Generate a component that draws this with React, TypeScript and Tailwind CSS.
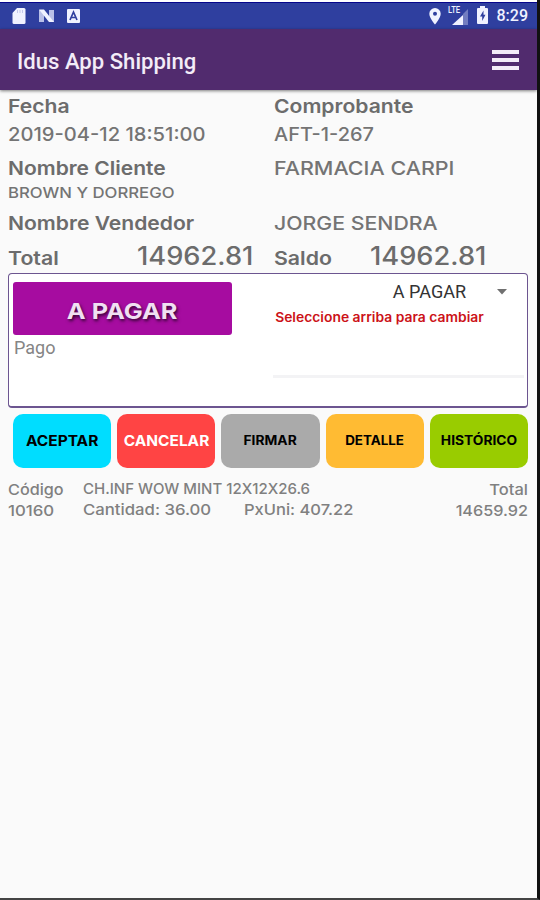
import React from 'react';

interface Action {
  label: string;
  box: string;
  text: string;
}

const actions: Action[] = [
  { label: 'ACEPTAR', box: 'bg-[#00ddff] text-black', text: 'text-[15px] scale-x-[1.03]' },
  { label: 'CANCELAR', box: 'bg-[#ff4444] text-white', text: 'text-[15px] scale-x-[1.03]' },
  { label: 'FIRMAR', box: 'bg-[#aaaaaa] text-black', text: 'text-[13px] scale-x-[1.06]' },
  { label: 'DETALLE', box: 'bg-[#ffbb33] text-black', text: 'text-[13px] scale-x-[1.03]' },
  { label: 'HISTÓRICO', box: 'bg-[#99cc00] text-black', text: 'text-[13px] scale-x-[1.06]' },
];

const StatusBar: React.FC = () => (
  <div className="flex h-[27px] items-center justify-between border-t border-[#06068c] bg-[#2f3f9f] pl-3 pr-[9px] text-[#f0f2ff]">
    <div className="flex items-center gap-[12px]">
      <svg width="14" height="16" viewBox="0 0 14 16" fill="currentColor">
        <path d="M5 0h7a1.500 1.500 0 0 1 1.500 1.500v13A1.500 1.500 0 0 1 12 16H2a1.500 1.500 0 0 1-1.500-1.500V5z" />
        <path d="M5.500 2v3M8 2v3M10.500 2v3" stroke="#c3c8ea" strokeWidth="1" />
      </svg>
      <svg width="17" height="14" viewBox="0 0 17 14">
        <path d="M1 1h5v12H1zM11 1h5v12h-5z" fill="#b9c0e8" />
        <path d="M1 .5h5L16 13h-5z" fill="currentColor" />
      </svg>
      <svg width="13" height="14" viewBox="0 0 13 14">
        <rect width="13" height="14" rx="1" fill="currentColor" />
        <path d="M3 11 6.500 3 10 11M4.500 8.500h4" fill="none" stroke="#2f3f9f" strokeWidth="1.700" />
      </svg>
    </div>
    <div className="flex items-center">
      <svg width="12" height="17" viewBox="0 0 12 17" fill="currentColor">
        <path fillRule="evenodd" d="M6 0a5.700 5.700 0 0 0-5.700 5.700C.3 10 6 16.500 6 16.500S11.700 10 11.700 5.700A5.700 5.700 0 0 0 6 0m0 3.700a2 2 0 1 1 0 4 2 2 0 0 1 0-4" />
      </svg>
      <div className="relative ml-[7px] h-[17px] w-[20px]">
        <svg className="absolute left-[4px] top-[1px]" width="16" height="16" viewBox="0 0 16 16" fill="currentColor">
          <path d="M16 0v16h-5V5z" opacity=".35" />
          <path d="M0 16 11 6v10z" />
        </svg>
        <span className="absolute -top-[2px] left-0 inline-block origin-left scale-x-[0.85] font-['Roboto',sans-serif] text-[9px] font-medium leading-[9px]">
          LTE
        </span>
      </div>
      <svg className="-mt-[3px] ml-[9px]" width="11" height="18" viewBox="0 0 11 18">
        <path d="M3 0h5v2h2a1 1 0 0 1 1 1v14a1 1 0 0 1-1 1H1a1 1 0 0 1-1-1V3a1 1 0 0 1 1-1h2z" fill="currentColor" />
        <path d="M6.500 4.500 3 10.500h2.200V15L8.500 8.800H6.500z" fill="#2f3f9f" />
      </svg>
      <span className="ml-[9px] font-['Roboto',sans-serif] text-[16px] font-medium leading-none">8:29</span>
    </div>
  </div>
);

const AppBar: React.FC = () => (
  <header className="relative flex h-[61px] items-center justify-between bg-[#512b6e] pl-[17px] pr-[18px] pt-[3px] shadow-[0_1px_3px_rgba(0,0,0,0.5)]">
    <h1 className="origin-left scale-x-[1.005] font-['Roboto',sans-serif] text-[22px] font-medium text-[#f3ecf7]">Idus App Shipping</h1>
    <div className="flex flex-col gap-[4px] pb-[2px]">
      <span className="h-[4px] w-[27px] bg-[#f3ecf7]" />
      <span className="h-[4px] w-[27px] bg-[#f3ecf7]" />
      <span className="h-[4px] w-[27px] bg-[#f3ecf7]" />
    </div>
  </header>
);

const Details: React.FC = () => (
  <section className="flex flex-col text-[19px] font-medium text-[#747474]">
    <div className="flex h-[30px] items-center pt-[2px] font-semibold text-[#6c6c6c]">
      <span className="w-[266px] origin-left scale-x-[1.11]">Fecha</span>
      <span className="origin-left scale-x-[1.11]">Comprobante</span>
    </div>
    <div className="flex h-[28px] items-center pt-px">
      <span className="w-[266px] origin-left scale-x-[1.06]">2019-04-12 18:51:00</span>
      <span className="origin-left scale-x-[1.05]">AFT-1-267</span>
    </div>
    <div className="flex h-[38px] items-center pt-[2px]">
      <span className="w-[266px] origin-left scale-x-[1.105] font-semibold text-[#6c6c6c]">Nombre Cliente</span>
      <span className="origin-left scale-x-[1.13]">FARMACIA CARPI</span>
    </div>
    <div className="flex h-[12px] items-center text-[15px]">
      <span className="origin-left scale-x-[1.115]">BROWN Y DORREGO</span>
    </div>
    <div className="flex h-[49px] items-center pt-[2px]">
      <span className="w-[266px] origin-left scale-x-[1.11] font-semibold text-[#6c6c6c]">Nombre Vendedor</span>
      <span className="origin-left scale-x-[1.12]">JORGE SENDRA</span>
    </div>
    <div className="flex h-[25px] items-baseline leading-[17px] text-[#6c6c6c]">
      <span className="w-[129px] origin-left scale-x-[1.12] font-semibold">Total</span>
      <span className="w-[137px] origin-left scale-x-[1.09] text-[25px]">14962.81</span>
      <span className="w-[96px] origin-left scale-x-[1.12] font-semibold">Saldo</span>
      <span className="origin-left scale-x-[1.09] text-[25px]">14962.81</span>
    </div>
  </section>
);

const PaymentCard: React.FC = () => (
  <section className="flex h-[135px] rounded-[4px] border border-b-2 border-[#6c5590] bg-white pl-[4px] pr-[3px] pt-[8px]">
    <div className="w-[260px]">
      <button className="flex h-[53px] w-[219px] items-center justify-center rounded-[3px] bg-[#a60ca0] pt-[5px] text-[22px] font-bold text-[#f0e0f2]">
        <span className="scale-x-[1.15] [text-shadow:1px_2px_3px_rgba(0,0,0,0.7)]">A PAGAR</span>
      </button>
      <p className="pl-px font-['Roboto',sans-serif] text-[18px] leading-[26px] text-[#858585]">Pago</p>
    </div>
    <div className="flex flex-1 flex-col">
      <div className="flex h-[20px] items-center justify-end pr-[17px]">
        <span className="origin-right scale-x-[0.95] font-['Roboto',sans-serif] text-[19px] text-[#333333]">A PAGAR</span>
        <svg className="ml-[31px]" width="10" height="6" viewBox="0 0 10 6">
          <path d="M0 0h10L5 5.500z" fill="#707070" />
        </svg>
      </div>
      <p className="origin-left scale-x-[1.067] pl-[2px] pt-[6px] text-[13px] font-semibold leading-[18px] text-[#cc1218]">
        Seleccione arriba para cambiar
      </p>
      <div className="mt-[49px] h-[3px] bg-[#f3f3f5]" />
    </div>
  </section>
);

const ItemRow: React.FC = () => (
  <section className="flex text-[15px] font-medium leading-[21px] text-[#808080]">
    <div className="w-[75px] pt-px">
      <p className="origin-left scale-x-[1.08]">Código</p>
      <p className="origin-left scale-x-[1.12]">10160</p>
    </div>
    <div className="flex-1">
      <p className="origin-left">CH.INF WOW MINT 12X12X26.6</p>
      <div className="flex">
        <span className="w-[161px] origin-left scale-x-[1.115]">Cantidad: 36.00</span>
        <span className="origin-left scale-x-[1.1]">PxUni: 407.22</span>
      </div>
    </div>
    <div className="pt-px text-right">
      <p className="origin-right scale-x-[1.1]">Total</p>
      <p className="origin-right scale-x-[1.08]">14659.92</p>
    </div>
  </section>
);

const App: React.FC = () => {
  return (
    <div className="h-[900px] w-[540px] overflow-hidden border-b-2 border-r-[3px] border-b-[#444444] border-r-[#111111] bg-[#fafafa] font-['Inter',sans-serif]">
      <div className="h-[2px] bg-white" />
      <StatusBar />
      <AppBar />
      <main className="pl-[8px] pr-[9px] pt-[1px]">
        <Details />
        <PaymentCard />
        <div className="flex gap-[6px] pl-[5px] pt-[6px]">
          {actions.map((action) => (
            <button
              key={action.label}
              className={`flex h-[54px] flex-[1_1_0] items-center justify-center rounded-[10px] font-bold ${action.box}`}
            >
              <span className={action.text}>{action.label}</span>
            </button>
          ))}
        </div>
        <div className="pt-[10px]">
          <ItemRow />
        </div>
      </main>
    </div>
  );
};

export default App;
